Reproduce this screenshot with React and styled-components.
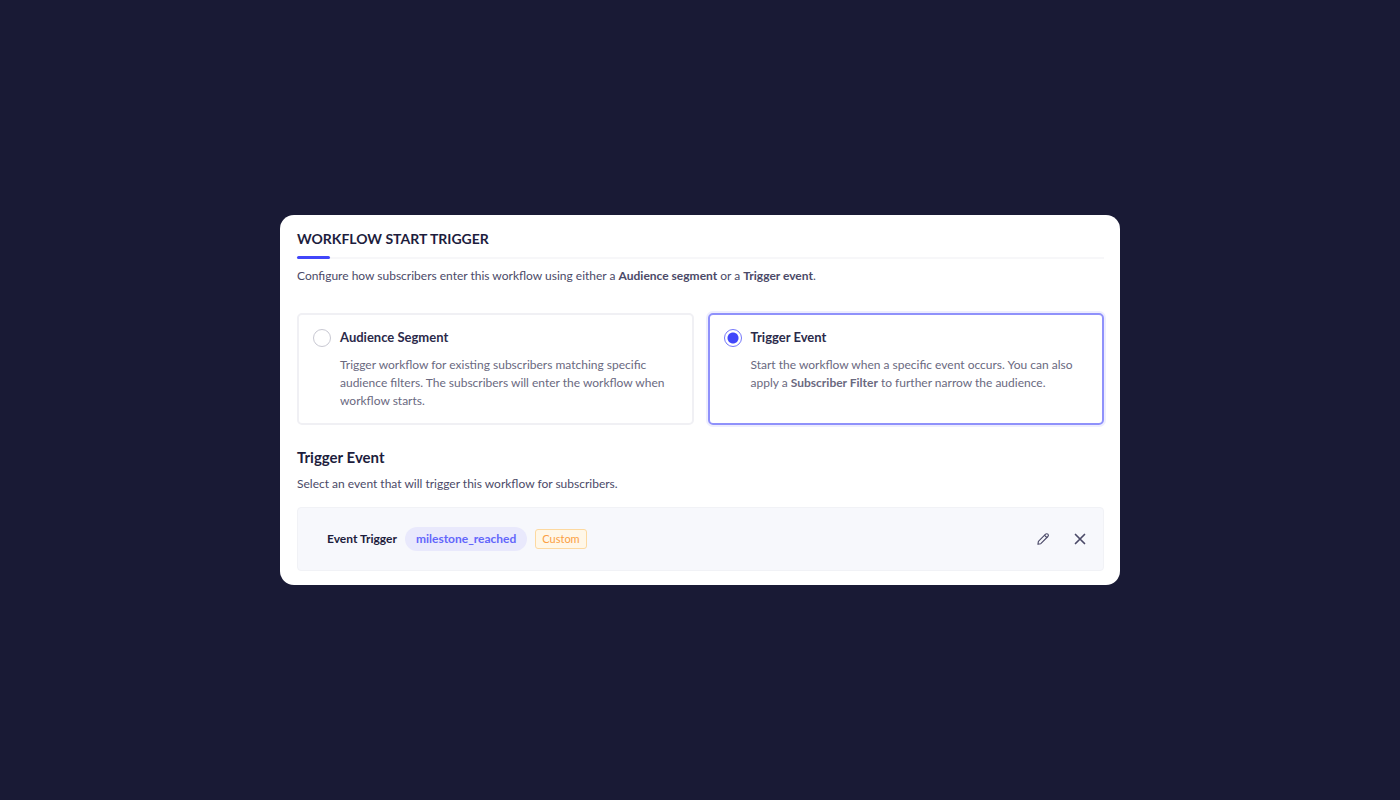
import React, { useState } from 'react'

import styled, { createGlobalStyle } from 'styled-components'

const options = [
    {
        id: 'segment',
        title: 'Audience Segment',
        text: 'Trigger workflow for existing subscribers matching specific audience filters. The subscribers will enter the workflow when workflow starts.',
    },
    {
        id: 'event',
        title: 'Trigger Event',
        text: <>Start the workflow when a specific event occurs. You can also apply a <b>Subscriber Filter</b> to further narrow the audience.</>,
    },
]

export default function App() {
    const [selected, setSelected] = useState('event')

    return (
        <Page>
            <GlobalStyle />
            <Dialog>
                <Title>WORKFLOW START TRIGGER</Title>
                <Intro>
                    Configure how subscribers enter this workflow using either a <b>Audience segment</b> or a <b>Trigger event</b>.
                </Intro>
                <Options>
                    {options.map(o => (
                        <Option key={o.id} $active={o.id === selected}>
                            <Radio
                                type="radio"
                                name="trigger"
                                checked={o.id === selected}
                                onChange={() => setSelected(o.id)}
                            />
                            <OptionBody>
                                <OptionTitle>{o.title}</OptionTitle>
                                <OptionText>{o.text}</OptionText>
                            </OptionBody>
                        </Option>
                    ))}
                </Options>
                <Heading>Trigger Event</Heading>
                <SubText>Select an event that will trigger this workflow for subscribers.</SubText>
                <EventRow>
                    <EventLabel>Event Trigger</EventLabel>
                    <EventName>milestone_reached</EventName>
                    <Tag>Custom</Tag>
                    <Actions>
                        <IconButton aria-label="Edit event">
                            <svg width="14" height="14" viewBox="0 0 14 14" fill="none" stroke="currentColor" strokeWidth="1.1" strokeLinejoin="round" strokeLinecap="round">
                                <path d="M1.9 12.3l.5-2.9L9.6 2.2a1.6 1.6 0 0 1 2.3 2.3L4.8 11.7z" />
                                <path d="M8.6 3.3l2.2 2.2" />
                            </svg>
                        </IconButton>
                        <IconButton aria-label="Remove event">
                            <svg width="14" height="14" viewBox="0 0 14 14" fill="none" stroke="currentColor" strokeWidth="1.7" strokeLinecap="round">
                                <path d="M2.5 2.5l9 9M11.5 2.5l-9 9" />
                            </svg>
                        </IconButton>
                    </Actions>
                </EventRow>
            </Dialog>
        </Page>
    )
}


const GlobalStyle = createGlobalStyle`

    * {
        box-sizing: border-box;
    }

    body {
        margin: 0;
        background: #191a35;
        color: #4b4a68;
        font: 12px/18px Lato, "Open Sans", sans-serif;
    }

    b {
        font-weight: 700;
    }

`

const Page = styled.main`

    min-height: 100vh;

    display: flex;
    justify-content: center;
    align-items: center;

`

const Dialog = styled.section`

    width: 60%;
    min-width: 480px;
    padding: 14px 16px 14px 17px;

    background: white;
    border-radius: 14px;

`

const Title = styled.h1`

    margin: 0;
    padding-bottom: 8px;

    color: #1d1d3d;
    font-size: 14px;
    font-weight: 700;
    line-height: 20px;

    border-bottom: 2px solid #f7f7f9;

    &::after {
        content: '';
        display: block;
        width: 33px;
        height: 3px;
        margin: 7px 0 -10px;
        background: #4146fa;
        border-radius: 2px;
    }

`

const Intro = styled.p`

    margin: 8px 0 28px;

`

const Options = styled.div`

    display: grid;
    grid-template-columns: 1fr 1fr;
    gap: 14px;

`

const Option = styled.label`

    display: flex;
    gap: 9px;
    padding: 13px 14px;

    border: 2px solid ${props => props.$active ? '#8f91fb' : '#f0f0f4'};
    border-radius: 5px;
    box-shadow: ${props => props.$active ? '0 0 0 2px #eeeefe' : 'none'};

    cursor: pointer;

`

const Radio = styled.input`

    appearance: none;
    flex: none;

    width: 18px;
    height: 18px;
    margin: 1px 0 0;

    border: 1px solid #c8c8d2;
    border-radius: 50%;

    &:checked {
        border-color: #7477fb;
        background: radial-gradient(circle, #4146fa 5px, white 6px);
    }

`

const OptionBody = styled.span`

    display: flex;
    flex-direction: column;
    gap: 10px;

`

const OptionTitle = styled.span`

    color: #2b2a4a;
    font-size: 13px;
    font-weight: 700;

`

const OptionText = styled.span`

    color: #6a697f;

`

const Heading = styled.h2`

    margin: 22px 0 8px;

    color: #1d1d3d;
    font-size: 15px;
    font-weight: 700;
    line-height: 20px;

`

const SubText = styled.p`

    margin: 0 0 14px;

`

const EventRow = styled.div`

    display: flex;
    align-items: center;
    gap: 8px;
    padding: 19px 16px 19px 29px;

    background: #f7f8fc;
    border: 1px solid #f1f2f6;
    border-radius: 4px;

`

const EventLabel = styled.span`

    color: #1d1d3d;
    font-weight: 700;

`

const EventName = styled.span`

    padding: 3px 11px;

    background: #e9e9fc;
    color: #6366fb;
    font-weight: 700;

    border-radius: 12px;

`

const Tag = styled.span`

    padding: 0 6px;

    background: #fff7e8;
    color: #fba043;
    font-size: 11px;

    border: 1px solid #fdd9a0;
    border-radius: 3px;

`

const Actions = styled.div`

    display: flex;
    gap: 23px;
    margin-left: auto;

`

const IconButton = styled.button`

    display: flex;
    padding: 0;

    background: none;
    color: #4b4a68;
    border: none;

    cursor: pointer;

`
